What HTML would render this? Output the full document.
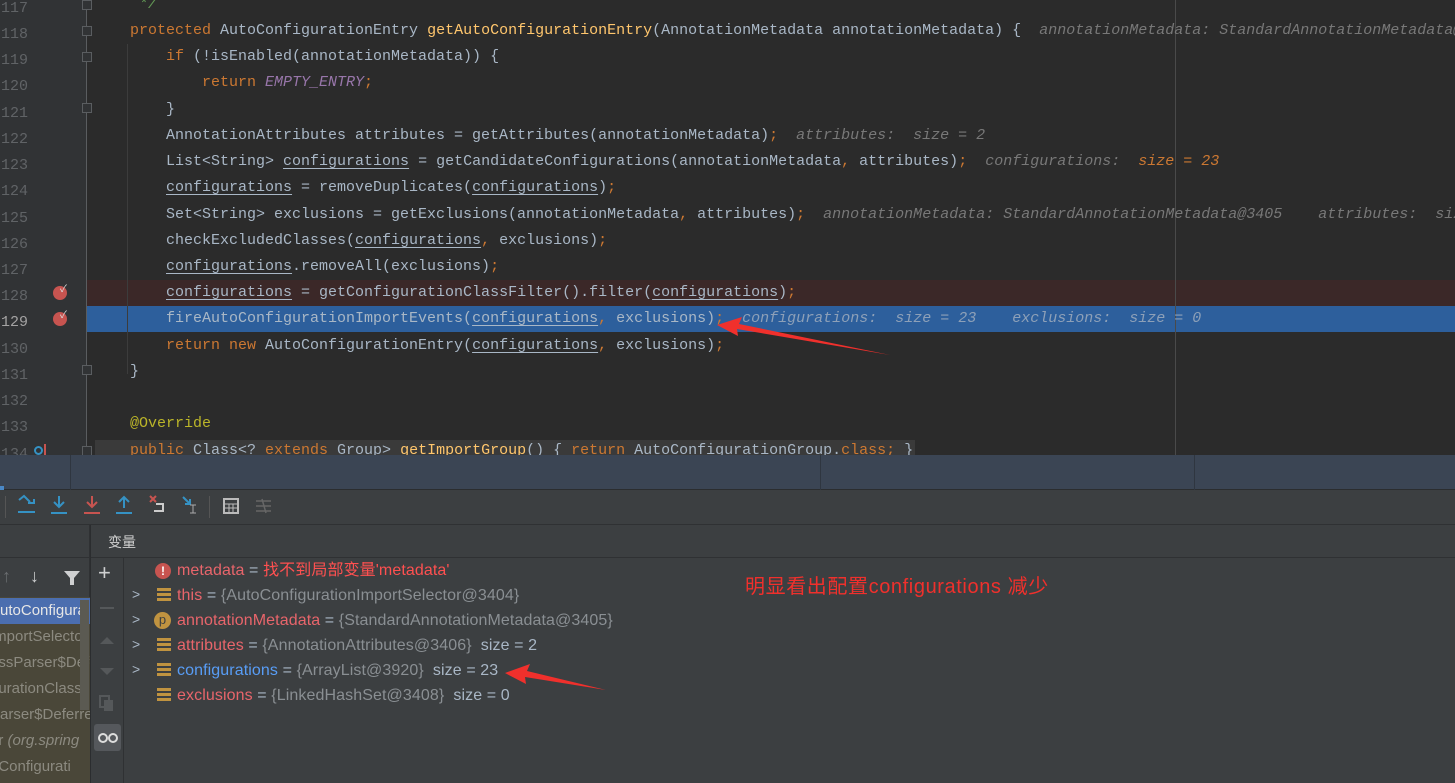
<!DOCTYPE html>
<html><head><meta charset="utf-8">
<style>
*{margin:0;padding:0;box-sizing:border-box}
body{width:1455px;height:783px;overflow:hidden;background:#2b2b2b;position:relative;font-family:"Liberation Sans","Noto Sans CJK SC",sans-serif}
.gut{position:absolute;left:0;top:0;width:87px;height:455px;background:#313335}
.ln{position:absolute;left:0;width:28px;text-align:right;font:15px "Liberation Mono",monospace;color:#606366;height:26px;line-height:26px;margin-top:4px}
.code{position:absolute;left:0;height:26px;line-height:26px;font:15px "Liberation Mono",monospace;color:#a9b7c6;white-space:pre;margin-top:4px}
.k{color:#cc7832}.m{color:#ffc66d}.s{color:#9876aa;font-style:italic}.c{color:#629755;font-style:italic}
.h{color:#787878;font-style:italic}.ho{color:#cc7832;font-style:italic}.a{color:#bbb529}
u{text-decoration:underline;text-underline-offset:3px}
.bp{position:absolute;left:53px;width:14px;height:14px;border-radius:50%;background:#c75450}
.fold{position:absolute;left:82px;width:10px;height:10px;border:1px solid #5a5d60;background:#313335}
.var{position:absolute;left:177px;font-size:16px;letter-spacing:0.1px;color:#a9b7c6;white-space:pre;line-height:25px;height:25px}
.vn{color:#e8656b}.vg{color:#8a8f93}
.ic{position:absolute;left:157px;width:14px;height:14px}
.bars{background:repeating-linear-gradient(#c09340 0 3px,transparent 3px 5px)}
.chev{position:absolute;left:132px;color:#a9b7c6;font-size:14px}
.fr{position:absolute;left:0;width:90px;height:26px;line-height:26px;font-size:15px;color:#8c8a80;white-space:nowrap;overflow:hidden;text-indent:-10px}
</style></head><body>
<div class="gut"></div>
<div style="position:absolute;left:87px;top:280px;width:1368px;height:26px;background:#3b2828"></div>
<div style="position:absolute;left:87px;top:306px;width:1368px;height:26px;background:#2d5f9c"></div>
<div style="position:absolute;left:95px;top:440px;width:820px;height:15px;background:#3a3a3a"></div>
<div style="position:absolute;left:1175px;top:0;width:1px;height:455px;background:#4a4a4a"></div>
<div style="position:absolute;left:127px;top:44px;width:1px;height:330px;background:#3c3c3c"></div>

<div class="ln" style="top:-8px">117</div>
<div class="ln" style="top:18px">118</div>
<div class="ln" style="top:44px">119</div>
<div class="ln" style="top:70px">120</div>
<div class="ln" style="top:97px">121</div>
<div class="ln" style="top:123px">122</div>
<div class="ln" style="top:149px">123</div>
<div class="ln" style="top:175px">124</div>
<div class="ln" style="top:202px">125</div>
<div class="ln" style="top:228px">126</div>
<div class="ln" style="top:254px">127</div>
<div class="ln" style="top:280px">128</div>
<div class="ln" style="top:306px;color:#a4a3a3">129</div>
<div class="ln" style="top:333px">130</div>
<div class="ln" style="top:359px">131</div>
<div class="ln" style="top:385px">132</div>
<div class="ln" style="top:411px">133</div>
<div class="ln" style="top:438px">134</div>

<div class="bp" style="top:286px"></div><div style="position:absolute;left:60px;top:280px;color:#ddd;font-size:10px">✓</div>
<div class="bp" style="top:312px"></div><div style="position:absolute;left:60px;top:306px;color:#ddd;font-size:10px">✓</div>
<div style="position:absolute;left:34px;top:446px;width:9px;height:9px;border:2px solid #3592c4;border-radius:50%"></div>
<div style="position:absolute;left:44px;top:444px;width:2px;height:11px;background:#c75450"></div>
<div style="position:absolute;left:86px;top:0;width:1px;height:455px;background:#5a5d60"></div>
<div class="fold" style="top:0"></div><div class="fold" style="top:26px"></div><div class="fold" style="top:52px"></div><div class="fold" style="top:103px"></div><div class="fold" style="top:365px"></div><div class="fold" style="top:446px"></div>

<div class="code" style="top:-8px;left:130px"><span class="c"> */</span></div>
<div class="code" style="top:18px;left:130px"><span class="k">protected </span>AutoConfigurationEntry <span class="m">getAutoConfigurationEntry</span>(AnnotationMetadata annotationMetadata) {  <span class="h">annotationMetadata: StandardAnnotationMetadata@3405</span></div>
<div class="code" style="top:44px;left:166px"><span class="k">if </span>(!isEnabled(annotationMetadata)) {</div>
<div class="code" style="top:70px;left:202px"><span class="k">return </span><span class="s">EMPTY_ENTRY</span><span class="k">;</span></div>
<div class="code" style="top:97px;left:166px">}</div>
<div class="code" style="top:123px;left:166px">AnnotationAttributes attributes = getAttributes(annotationMetadata)<span class="k">;</span>  <span class="h">attributes:  size = 2</span></div>
<div class="code" style="top:149px;left:166px">List&lt;String&gt; <u>configurations</u> = getCandidateConfigurations(annotationMetadata<span class="k">, </span>attributes)<span class="k">;</span>  <span class="h">configurations:  </span><span class="ho">size = 23</span></div>
<div class="code" style="top:175px;left:166px"><u>configurations</u> = removeDuplicates(<u>configurations</u>)<span class="k">;</span></div>
<div class="code" style="top:202px;left:166px">Set&lt;String&gt; exclusions = getExclusions(annotationMetadata<span class="k">, </span>attributes)<span class="k">;</span>  <span class="h">annotationMetadata: StandardAnnotationMetadata@3405    attributes:  size = 2</span></div>
<div class="code" style="top:228px;left:166px">checkExcludedClasses(<u>configurations</u><span class="k">, </span>exclusions)<span class="k">;</span></div>
<div class="code" style="top:254px;left:166px"><u>configurations</u>.removeAll(exclusions)<span class="k">;</span></div>
<div class="code" style="top:280px;left:166px"><u>configurations</u> = getConfigurationClassFilter().filter(<u>configurations</u>)<span class="k">;</span></div>
<div class="code" style="top:306px;left:166px">fireAutoConfigurationImportEvents(<u>configurations</u><span class="k">, </span>exclusions)<span class="k">;</span>  <span class="h" style="color:#8da0b8">configurations:  size = 23    exclusions:  size = 0</span></div>
<div class="code" style="top:333px;left:166px"><span class="k">return new </span>AutoConfigurationEntry(<u>configurations</u><span class="k">, </span>exclusions)<span class="k">;</span></div>
<div class="code" style="top:359px;left:130px">}</div>
<div class="code" style="top:411px;left:130px"><span class="a">@Override</span></div>
<div class="code" style="top:438px;left:130px"><span class="k">public </span>Class&lt;? <span class="k">extends </span>Group&gt; <span class="m">getImportGroup</span>() { <span class="k">return </span>AutoConfigurationGroup.<span class="k">class; </span>}</div>

<div style="position:absolute;left:0;top:455px;width:1455px;height:35px;background:#3b4554;border-bottom:1px solid #2b2d2f"></div>
<div style="position:absolute;left:70px;top:455px;width:1px;height:35px;background:#2f3640"></div>
<div style="position:absolute;left:820px;top:455px;width:1px;height:35px;background:#2f3640"></div>
<div style="position:absolute;left:1194px;top:455px;width:1px;height:35px;background:#2f3640"></div>
<div style="position:absolute;left:0;top:486px;width:4px;height:4px;background:#4a88c7"></div>
<div style="position:absolute;left:0;top:490px;width:1455px;height:293px;background:#3c3f41"></div>
<div style="position:absolute;left:0;top:524px;width:1455px;height:1px;background:#2f3133"></div>
<svg style="position:absolute;left:0;top:490px" width="300" height="34">
<g stroke-width="2" fill="none">
<path d="M19 10 L24 6 L30 12 M28 13 L34 13 L34 9" stroke="#3592c4"/><path d="M18 22 H35" stroke="#3592c4"/>
<path d="M59 6 V16 M54 12 L59 17 L64 12 M51 23 H67" stroke="#3592c4"/>
<path d="M92 6 V16 M87 12 L92 17 L97 12 M84 23 H100" stroke="#c75450"/>
<path d="M124 18 V8 M119 12 L124 7 L129 12 M116 23 H132" stroke="#3592c4"/>
<path d="M150 6 L156 12 M156 6 L150 12" stroke="#c75450"/><path d="M156 14 H163 V21 H154" stroke="#ccc"/>
<path d="M183 7 L190 14 M185 14 H190 V9" stroke="#3592c4"/><path d="M193 15 V23 M190 15 H196 M190 23 H196" stroke="#aaa" stroke-width="1"/>
<rect x="224" y="9" width="14" height="14" stroke="#bbb"/><path d="M224 14 H238 M224 18 H238 M229 14 V23 M233 14 V23" stroke="#bbb" stroke-width="1"/>
<path d="M256 11 H271 M256 16 H271 M256 21 H271 M262 9 L266 23" stroke="#666" stroke-width="1.5"/>
</g>
<rect x="5" y="6" width="1" height="22" fill="#555"/><rect x="209" y="6" width="1" height="22" fill="#555"/>
</svg>
<div style="position:absolute;left:0;top:525px;width:90px;height:258px;background:#3c3f41;border-right:1px solid #2f3133"></div>
<div style="position:absolute;left:90px;top:525px;width:1px;height:258px;background:#2b2d2f"></div>
<div style="position:absolute;left:0;top:557px;width:90px;height:1px;background:#2f3133"></div>
<div style="position:absolute;left:2px;top:566px;color:#6a6d70;font-size:18px">↑</div>
<div style="position:absolute;left:30px;top:566px;color:#cfd0d1;font-size:18px">↓</div>
<svg style="position:absolute;left:63px;top:570px" width="18" height="16"><path d="M1 1 H17 L11 8 V15 H7 V8 Z" fill="#cfd0d1"/></svg>
<div style="position:absolute;left:0;top:597px;width:90px;height:186px;background:#4a4739"></div>
<div class="fr" style="top:598px;background:#4b6eaf;color:#e6e6e6">AutoConfigura</div>
<div class="fr" style="top:624px">ImportSelector</div>
<div class="fr" style="top:650px">assParser$Defe</div>
<div class="fr" style="top:676px">gurationClassI</div>
<div class="fr" style="top:702px">Parser$Deferre</div>
<div class="fr" style="top:728px">er <i>(org.spring</i></div>
<div class="fr" style="top:754px">, Configurati</div>
<div style="position:absolute;left:80px;top:600px;width:9px;height:110px;background:#5b5a52"></div>
<div style="position:absolute;left:123px;top:558px;width:1px;height:225px;background:#2f3133"></div>
<div style="position:absolute;left:91px;top:557px;width:1364px;height:1px;background:#2f3133"></div>
<div style="position:absolute;left:98px;top:560px;color:#cfd0d1;font-size:22px">+</div>
<div style="position:absolute;left:100px;top:607px;width:14px;height:2px;background:#55585a"></div>
<svg style="position:absolute;left:98px;top:630px" width="20" height="120"><path d="M2 14 L9 7 L16 14 Z" fill="#55585a"/><path d="M2 38 L9 45 L16 38 Z" fill="#55585a"/><rect x="2" y="66" width="9" height="11" fill="none" stroke="#55585a" stroke-width="2"/><rect x="6" y="70" width="9" height="11" fill="#55585a"/></svg>
<div style="position:absolute;left:94px;top:724px;width:27px;height:27px;background:#55585c;border-radius:3px"></div>
<svg style="position:absolute;left:97px;top:732px" width="22" height="12"><circle cx="6" cy="6" r="4" fill="none" stroke="#ddd" stroke-width="2"/><circle cx="16" cy="6" r="4" fill="none" stroke="#ddd" stroke-width="2"/></svg>
<div style="position:absolute;left:108px;top:532px;color:#d0d0d0;font-size:14px">变量</div>
<div style="position:absolute;left:155px;top:563px;width:16px;height:16px;border-radius:50%;background:#c75450;color:#fff;font-size:12px;font-weight:bold;text-align:center;line-height:16px">!</div>
<div class="var" style="top:558px"><span class="vn">metadata</span> = <span style="color:#ff5050">找不到局部变量'metadata'</span></div>
<div class="chev" style="top:586px">&gt;</div><div class="ic bars" style="top:588px"></div>
<div class="var" style="top:583px"><span class="vn">this</span> = <span class="vg">{AutoConfigurationImportSelector@3404}</span></div>
<div class="chev" style="top:611px">&gt;</div><div style="position:absolute;left:154px;top:612px;width:17px;height:17px;border-radius:50%;background:#c09340;color:#3c3f41;font-size:13px;text-align:center;line-height:16px">p</div>
<div class="var" style="top:608px"><span class="vn">annotationMetadata</span> = <span class="vg">{StandardAnnotationMetadata@3405}</span></div>
<div class="chev" style="top:636px">&gt;</div><div class="ic bars" style="top:638px"></div>
<div class="var" style="top:633px"><span class="vn">attributes</span> = <span class="vg">{AnnotationAttributes@3406}</span>  size = 2</div>
<div class="chev" style="top:661px">&gt;</div><div class="ic bars" style="top:663px"></div>
<div class="var" style="top:658px"><span style="color:#589df6">configurations</span> = <span class="vg">{ArrayList@3920}</span>  size = 23</div>
<div class="ic bars" style="top:688px"></div>
<div class="var" style="top:683px"><span class="vn">exclusions</span> = <span class="vg">{LinkedHashSet@3408}</span>  size = 0</div>
<div style="position:absolute;left:745px;top:570px;color:#f0302c;font-size:20px;letter-spacing:0.6px;white-space:pre;font-family:'Liberation Sans','Noto Sans CJK SC',sans-serif">明显看出配置configurations 减少</div>
<svg style="position:absolute;left:0;top:0" width="1455" height="783">
<path d="M717 325 L742 317 L739 324 L890 355 L737 329 L738 336 Z" fill="#f0302c"/>
<path d="M505 673 L530 664 L527 671 L606 690 L525 677 L526 684 Z" fill="#f0302c"/>
</svg>
</body></html>
